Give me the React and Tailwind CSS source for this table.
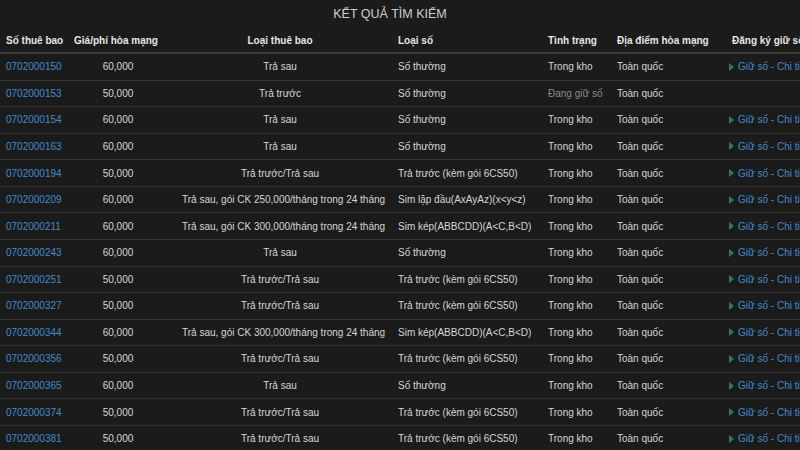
const rows = [
  ["0702000150", "60,000", "Trả sau", "Số thường", "Trong kho", true],
  ["0702000153", "50,000", "Trả trước", "Số thường", "Đang giữ số", false],
  ["0702000154", "60,000", "Trả sau", "Số thường", "Trong kho", true],
  ["0702000163", "60,000", "Trả sau", "Số thường", "Trong kho", true],
  ["0702000194", "50,000", "Trả trước/Trả sau", "Trả trước (kèm gói 6CS50)", "Trong kho", true],
  ["0702000209", "60,000", "Trả sau, gói CK 250,000/tháng trong 24 tháng", "Sim lặp đầu(AxAyAz)(x<y<z)", "Trong kho", true],
  ["0702000211", "60,000", "Trả sau, gói CK 300,000/tháng trong 24 tháng", "Sim kép(ABBCDD)(A<C,B<D)", "Trong kho", true],
  ["0702000243", "60,000", "Trả sau", "Số thường", "Trong kho", true],
  ["0702000251", "50,000", "Trả trước/Trả sau", "Trả trước (kèm gói 6CS50)", "Trong kho", true],
  ["0702000327", "50,000", "Trả trước/Trả sau", "Trả trước (kèm gói 6CS50)", "Trong kho", true],
  ["0702000344", "60,000", "Trả sau, gói CK 300,000/tháng trong 24 tháng", "Sim kép(ABBCDD)(A<C,B<D)", "Trong kho", true],
  ["0702000356", "50,000", "Trả trước/Trả sau", "Trả trước (kèm gói 6CS50)", "Trong kho", true],
  ["0702000365", "60,000", "Trả sau", "Số thường", "Trong kho", true],
  ["0702000374", "50,000", "Trả trước/Trả sau", "Trả trước (kèm gói 6CS50)", "Trong kho", true],
  ["0702000381", "50,000", "Trả trước/Trả sau", "Trả trước (kèm gói 6CS50)", "Trong kho", true],
];

const grid = "grid grid-cols-[72px_88px_232px_150px_69px_115px_1fr] items-center";

export default function App() {
  return (
    <div className="w-[800px] h-[450px] overflow-hidden bg-[#1b1b1b] text-[10px] text-[#d6d6d6] whitespace-nowrap" style={{ fontFamily: '"Liberation Sans", Arial, sans-serif' }}>
      <div className="h-[28px] flex items-center justify-center text-[12.5px] text-[#cfcfcf]">
        <span className="ml-[-20px]">KẾT QUẢ TÌM KIẾM</span>
      </div>
      <div className={`${grid} h-[26px] border-b-2 border-[#3a3a3a] font-bold text-[#e6e6e6]`}>
        <div className="pl-[6px]">Số thuê bao</div>
        <div className="text-center">Giá/phí hòa mạng</div>
        <div className="pl-[22px] pr-[14px] text-center">Loại thuê bao</div>
        <div className="pl-[6px]">Loại số</div>
        <div className="pl-[6px]">Tình trạng</div>
        <div className="pl-[6px]">Địa điểm hòa mạng</div>
        <div className="pl-[6px]">Đăng ký giữ số</div>
      </div>
      {rows.map((r) => (
        <div key={r[0]} className={`${grid} h-[26.57px] border-b border-[#333]`}>
          <div className="pl-[6px] text-[#428bca]">{r[0]}</div>
          <div className="text-center pl-[4px]">{r[1]}</div>
          <div className="pl-[22px] pr-[14px] text-center">{r[2]}</div>
          <div className="pl-[6px]">{r[3]}</div>
          <div className={r[5] ? "pl-[6px]" : "pl-[6px] text-[#8a8a8a]"}>{r[4]}</div>
          <div className="pl-[6px]">Toàn quốc</div>
          <div className="pl-[3px] flex items-center">
            {r[5] && (
              <>
                <span className="w-0 h-0 border-y-[4px] border-y-transparent border-l-[5px] border-l-[#2e7d45] mr-[4px]"></span>
                <span className="text-[#428bca]">Giữ số - Chi tiết</span>
              </>
            )}
          </div>
        </div>
      ))}
    </div>
  );
}
